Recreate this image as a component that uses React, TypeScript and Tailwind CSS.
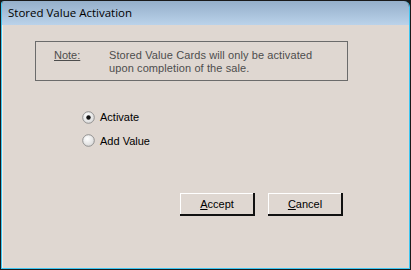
import React from "react";

export default function App() {
  return (
    <div className="w-[411px] h-[270px] bg-[#1a1a1a] p-[1px]" style={{ fontFamily: '"Liberation Sans", Arial, sans-serif' }}>
      <div className="w-full h-full flex flex-col border-r-[1px] border-b-[1px] border-l-[1px] border-[#3ec6f2] rounded-tr-[6px] rounded-tl-[3px] overflow-hidden">
        <div className="h-[24px] bg-gradient-to-b from-[#95afca] to-[#bad2ea] flex items-center pl-[6px]">
          <span className="text-[11.5px] text-black" style={{ fontFamily: '"Open Sans", "Noto Sans", sans-serif' }}>Stored Value Activation</span>
        </div>
        <div className="flex-1 bg-[#dfd7d1] border-l border-[#f0ece8] relative">
          <div className="ml-[32px] mt-[16px] w-[313px] h-[40px] border border-[#6b6b6b] flex pt-[7px] text-[11px] leading-[13px] text-[#4d4d4d]">
            <span className="ml-[18px] w-[55px] underline">Note:</span>
            <div className="tracking-[0.1px]">
              <div>Stored Value Cards will only be activated</div>
              <div>upon completion of the sale.</div>
            </div>
          </div>
          <div className="ml-[79px] mt-[28px] flex flex-col gap-[7px] text-[11px] text-black">
            <div className="flex items-center gap-[5px]">
              <Radio checked />
              <span>Activate</span>
            </div>
            <div className="flex items-center gap-[5px]">
              <Radio />
              <span>Add Value</span>
            </div>
          </div>
          <div className="ml-[177px] mt-[44px] flex gap-[13px] text-[11px] text-black">
            <Btn u="A" rest="ccept" />
            <Btn u="C" rest="ancel" />
          </div>
        </div>
      </div>
    </div>
  );
}

function Radio({ checked }: { checked?: boolean }) {
  const id = checked ? "g1" : "g2";
  return (
    <svg width="13" height="13" viewBox="0 0 13 13">
      <defs>
        <radialGradient id={id} cx="40%" cy="35%" r="70%">
          <stop offset="0%" stopColor="#ffffff" />
          <stop offset="100%" stopColor="#d8d8d8" />
        </radialGradient>
      </defs>
      <circle cx="6.5" cy="6.5" r="5.8" fill={`url(#${id})`} stroke="#8a8a8a" strokeWidth="0.9" />
      {checked && <circle cx="6.5" cy="6.5" r="2.2" fill="#111" />}
    </svg>
  );
}

function Btn({ u, rest }: { u: string; rest: string }) {
  return (
    <div className="w-[75px] h-[23px] bg-[#111] pr-[2px] pb-[2px]">
      <div className="w-full h-full bg-[#dfd7d1] border-t border-l border-white flex items-center justify-center">
        <span>
          <span className="underline">{u}</span>
          {rest}
        </span>
      </div>
    </div>
  );
}
